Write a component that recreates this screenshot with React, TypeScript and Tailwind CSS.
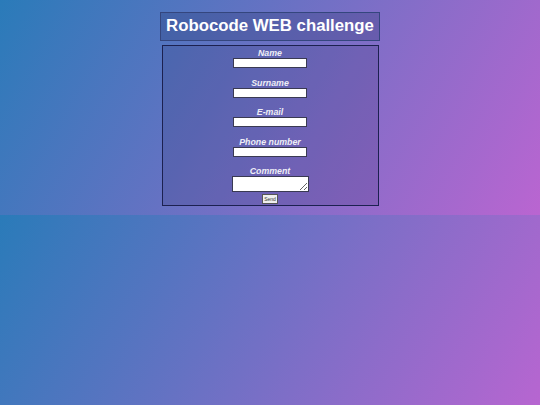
import React from "react";

const fields = ["Name", "Surname", "E-mail", "Phone number"];

export default function App() {
  return (
    <div
      className="min-h-screen w-full bg-[linear-gradient(119deg,#2a7bb9,#ba65d1)] bg-[length:100%_215px] bg-repeat"
      style={{ fontFamily: '"Liberation Sans", Arial, sans-serif' }}
    >
      <div className="flex flex-col items-center pt-[12px] h-[215px]">
        <div className="w-[220px] h-[29px] flex items-center justify-center bg-[rgba(20,30,80,0.22)] border border-[#34467e] text-white font-bold text-[16.8px] leading-none whitespace-nowrap">
          Robocode WEB challenge
        </div>
        <form className="mt-[4px] w-[217px] h-[161px] border border-[#1c2150] bg-[rgba(20,20,70,0.14)] flex flex-col items-center">
          {fields.map((f) => (
            <div key={f} className="flex flex-col items-center mb-[7.5px]">
              <label className="h-[12px] leading-[14px] text-[8.8px] italic font-bold text-[#eeeef6] overflow-visible">
                {f}
              </label>
              <input
                type="text"
                className="w-[74px] h-[10px] bg-white border border-[#3a3a52] outline-none"
              />
            </div>
          ))}
          <label className="h-[12px] leading-[14px] text-[8.8px] italic font-bold text-[#eeeef6]">
            Comment
          </label>
          <textarea className="w-[77px] h-[16px] bg-white border border-[#3a3a52] resize outline-none" />
          <button
            type="button"
            className="mt-[2px] w-[16px] h-[10px] bg-[#efefef] border border-[#555] text-[5px] leading-none text-[#333] flex items-center justify-center p-0"
          >
            Send
          </button>
        </form>
      </div>
    </div>
  );
}
